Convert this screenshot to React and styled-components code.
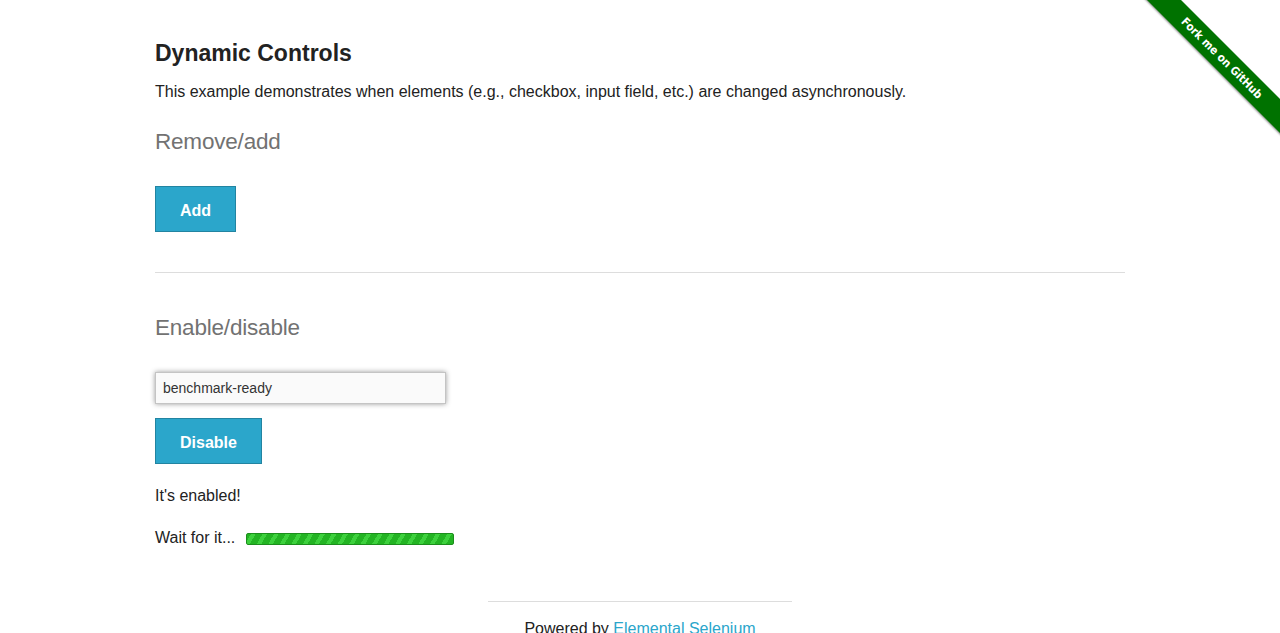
import React from 'react'
import styled, { createGlobalStyle } from 'styled-components';

const GlobalStyle = createGlobalStyle`
  body {
    margin: 0;
    background: #fff;
    color: #222;
    font-family: "Liberation Sans", Arial, sans-serif;
  }
`;

const App = () => {
  return (
    <>
      <GlobalStyle />
      <Page>
        <Content>
          <Title>Dynamic Controls</Title>
          <Lead>
            This example demonstrates when elements (e.g., checkbox, input field, etc.) are changed asynchronously.
          </Lead>

          <SectionTitle>Remove/add</SectionTitle>
          <Button type='button'>Add</Button>

          <Divider />

          <SectionTitle>Enable/disable</SectionTitle>
          <TextInput type='text' defaultValue='benchmark-ready' />
          <Button type='button'>Disable</Button>
          <Message>It's enabled!</Message>
          <Loading>
            Wait for it...
            <ProgressBar />
          </Loading>
        </Content>

        <Footer>
          <FooterRule />
          <FooterText>
            Powered by <FooterLink href='#'>Elemental Selenium</FooterLink>
          </FooterText>
        </Footer>
      </Page>

      <Ribbon>
        <RibbonBand>Fork me on GitHub</RibbonBand>
      </Ribbon>
    </>
  )
}

const Page = styled.div`
  width: 970px;
  margin: 0 auto;
  padding-top: 40px;
`;

const Content = styled.div`
  display: flex;
  flex-direction: column;
  align-items: flex-start;
`;

const Title = styled.h3`
  margin: 0;
  font-size: 23px;
  line-height: 26px;
  font-weight: 700;
  color: #222;
`;

const Lead = styled.p`
  margin: 14px 0 0;
  font-size: 16px;
  line-height: 24px;
`;

const SectionTitle = styled.h4`
  margin: 25px 0 31px;
  font-size: 22.5px;
  line-height: 26px;
  font-weight: 400;
  color: #727272;
  letter-spacing: -0.2px;
`;

const Button = styled.button`
  box-sizing: border-box;
  height: 46px;
  padding: 3px 24px 0;
  background: #2ba6cb;
  border: 1px solid #2284a1;
  color: #fff;
  font-family: "Liberation Sans", Arial, sans-serif;
  font-size: 16px;
  font-weight: 700;
  cursor: pointer;
`;

const Divider = styled.hr`
  align-self: stretch;
  margin: 40px 0 17px;
  border: 0;
  border-top: 1px solid #ddd;
`;

const TextInput = styled.input`
  box-sizing: border-box;
  width: 291px;
  height: 32px;
  margin: 0 0 14px;
  padding: 0 7px;
  border: 1px solid #c4c4c4;
  background: #fafafa;
  box-shadow: 0 0 5px #999;
  font-family: "Liberation Sans", Arial, sans-serif;
  font-size: 14px;
  color: #333;
  outline: none;
`;

const Message = styled.p`
  margin: 20px 0 0;
  font-size: 16px;
  line-height: 24px;
`;

const Loading = styled.div`
  display: flex;
  align-items: center;
  gap: 11px;
  margin-top: 18px;
  font-size: 16px;
  line-height: 24px;
`;

const ProgressBar = styled.div`
  box-sizing: border-box;
  width: 208px;
  height: 12px;
  margin-top: 2px;
  border: 1px solid #1c8e1c;
  border-radius: 2px;
  background: repeating-linear-gradient(
    -60deg,
    #23b423 0 6px,
    #3dd13d 6px 10px
  );
`;

const Footer = styled.div`
  display: flex;
  flex-direction: column;
  align-items: center;
  margin-top: 51px;
`;

const FooterRule = styled.hr`
  width: 304px;
  margin: 0;
  border: 0;
  border-top: 1px solid #ddd;
`;

const FooterText = styled.div`
  margin-top: 17px;
  font-size: 16px;
  line-height: 20px;
`;

const FooterLink = styled.a`
  color: #2ba6cb;
  text-decoration: none;
`;

const Ribbon = styled.div`
  position: absolute;
  top: 0;
  right: 0;
  width: 149px;
  height: 149px;
  overflow: hidden;
  pointer-events: none;
`;

const RibbonBand = styled.div`
  position: absolute;
  top: 46px;
  right: -42px;
  width: 200px;
  height: 24px;
  line-height: 24px;
  transform: rotate(45deg);
  background: #007200;
  box-shadow: 0 1px 2px rgba(0, 0, 0, 0.45);
  color: #fff;
  text-align: center;
  font-family: "Liberation Sans Narrow", "DejaVu Sans Condensed", sans-serif;
  font-size: 11.5px;
  font-weight: 700;
`;

export default App
